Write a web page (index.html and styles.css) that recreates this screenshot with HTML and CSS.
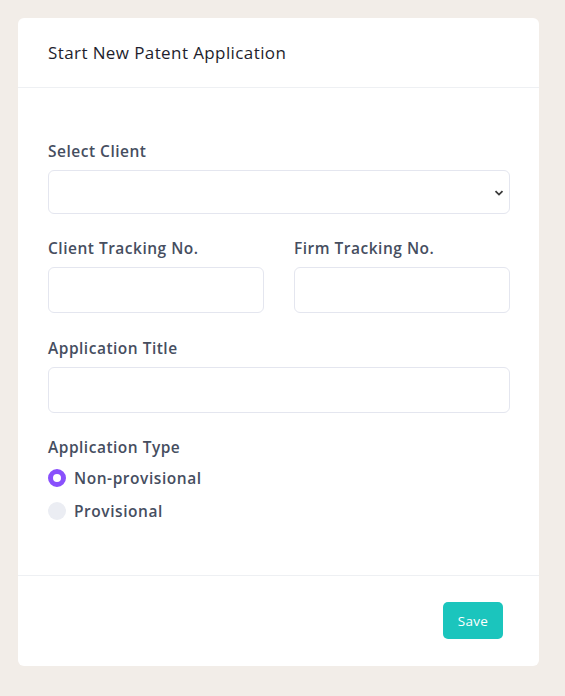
FILE: index.html
```html
<!DOCTYPE html>
<html>
<head>
<meta charset="utf-8">
<link rel="stylesheet" href="styles.css">
</head>
<body>
<div class="card">
  <div class="card-header">
    <h3 class="card-title">Start New Patent Application</h3>
  </div>
  <div class="card-body">
    <div class="field">
      <label class="label">Select Client</label>
      <div class="select">
        <svg class="chev" width="10" height="8" viewBox="0 0 10 8"><path d="M1.5 2.2 L5 5.6 L8.5 2.2" fill="none" stroke="#3a3a3a" stroke-width="1.8"/></svg>
      </div>
    </div>
    <div class="row">
      <div class="field">
        <label class="label">Client Tracking No.</label>
        <div class="input"></div>
      </div>
      <div class="field">
        <label class="label">Firm Tracking No.</label>
        <div class="input"></div>
      </div>
    </div>
    <div class="field">
      <label class="label">Application Title</label>
      <div class="input"></div>
    </div>
    <div class="field">
      <label class="label">Application Type</label>
      <div class="radios">
        <div class="radio-row"><span class="radio checked"></span><span class="radio-text">Non-provisional</span></div>
        <div class="radio-row"><span class="radio"></span><span class="radio-text">Provisional</span></div>
      </div>
    </div>
  </div>
  <div class="card-footer">
    <button class="btn">Save</button>
  </div>
</div>
</body>
</html>
```
FILE: styles.css
```css
html, body { margin: 0; padding: 0; }
body {
  background: #f2ede8;
  font-family: "Open Sans", "Liberation Sans", sans-serif;
  padding: 18px 26px 30px 18px;
}
.card {
  width: 521px;
  background: #fff;
  border-radius: 6px;
}
.card-header {
  height: 69px;
  border-bottom: 1px solid #eef0f3;
  display: flex;
  align-items: center;
  padding: 0 30px;
}
.card-title {
  margin: 0;
  font-size: 17px;
  letter-spacing: 0.4px;
  font-weight: 500;
  color: #1e1e2d;
}
.card-body {
  padding: 53px 29px 54px 30px;
  display: flex;
  flex-direction: column;
}
.field { display: flex; flex-direction: column; margin-bottom: 24px; }
.row { display: grid; grid-template-columns: 1fr 1fr; column-gap: 30px; margin-bottom: 1px; }
.label {
  font-size: 15.5px;
  letter-spacing: 0.5px;
  font-weight: 600;
  color: #464e5f;
  line-height: 20px;
  margin-bottom: 9px;
}
.select, .input {
  border: 1px solid #e4e6ef;
  border-radius: 6px;
  box-sizing: border-box;
  position: relative;
}
.select { height: 44px; }
.input { height: 46px; }
.chev { position: absolute; right: 5px; top: 18px; }
.radios { display: flex; flex-direction: column; gap: 13px; margin-top: 2px; }
.radio-row { display: flex; align-items: center; gap: 8px; height: 20px; }
.radio {
  width: 18px; height: 18px; border-radius: 50%;
  background: #ebedf3;
  box-sizing: border-box;
}
.radio.checked {
  border: 5.5px solid #8950fc;
  background: #fff;
}
.radio-text { font-size: 15.5px; letter-spacing: 0.55px; font-weight: 600; color: #464e5f; }
.field:last-child { margin-bottom: 0; }
.card-footer {
  border-top: 1px solid #eef0f3;
  padding: 26px 36px 27px 30px;
  display: flex;
  justify-content: flex-end;
}
.btn {
  width: 60px; height: 37px;
  background: #1bc5bd;
  color: #fff;
  border: none;
  border-radius: 5px;
  font-family: inherit;
  font-size: 13.5px;
  letter-spacing: 0.3px;
  font-weight: 500;
}
```
